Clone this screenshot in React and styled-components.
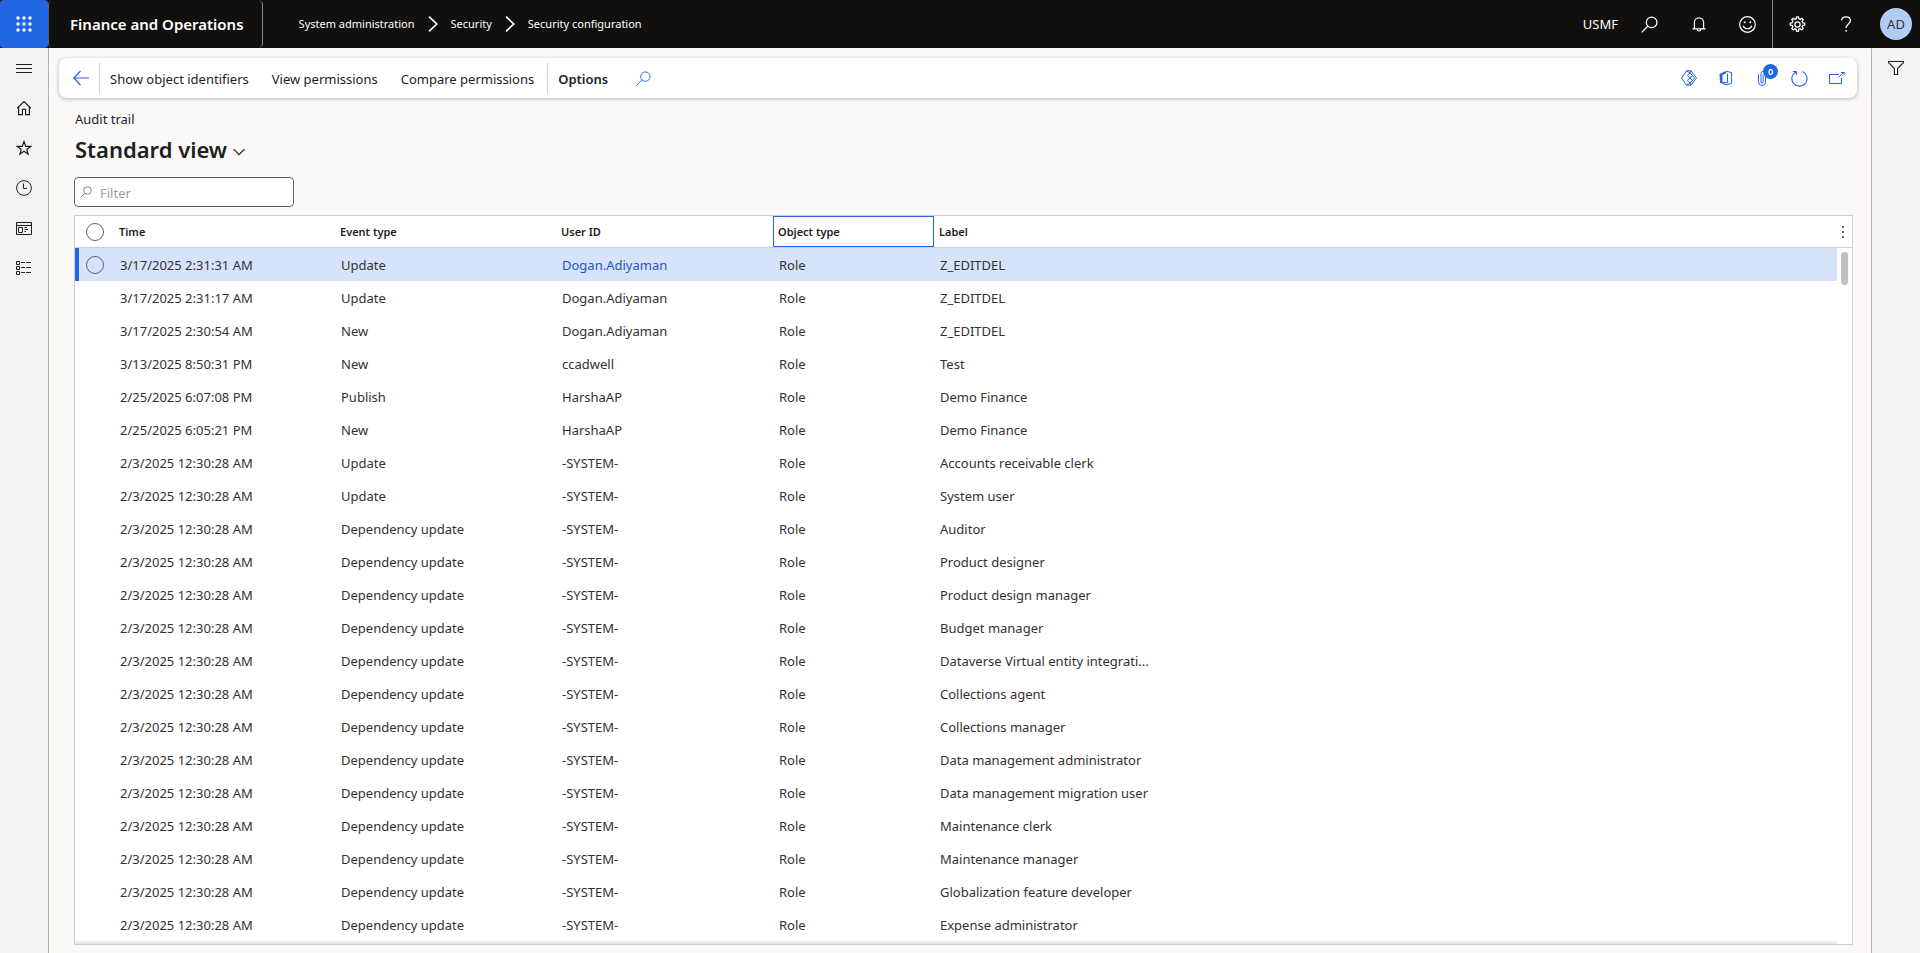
import styled, { createGlobalStyle, css } from "styled-components";

const GlobalStyle = createGlobalStyle`
    * {
        box-sizing: border-box;
    }

    body {
        margin: 0;
        font-family: "Noto Sans", "Open Sans", sans-serif;
        font-size: 13px;
        line-height: 20px;
        color: #201f1e;
        background-color: #faf9f8;
    }

    button, input {
        font: inherit;
        color: inherit;
    }

    button {
        padding: 0;
        border: 0;
        background: none;
        cursor: pointer;
    }

    a {
        color: inherit;
        text-decoration: none;
    }
`;

/* ---------- icons ---------- */

const Icon = styled.svg.attrs({ fill: "none", stroke: "currentColor", "aria-hidden": true })`
    display: block;
    flex: none;
    width: ${(props) => props.$size || 16}px;
    height: ${(props) => props.$size || 16}px;
`;

const WaffleIcon = () => (
    <Icon viewBox="0 0 16 16">
        {[2, 8, 14].map((y) =>
            [2, 8, 14].map((x) => <circle key={`${x}-${y}`} cx={x} cy={y} r="1.7" fill="#fff" stroke="none" />)
        )}
    </Icon>
);

const SearchIcon = ({ size, width = 1 }) => (
    <Icon $size={size} viewBox="0 0 16 16" strokeWidth={width}>
        <circle cx="10" cy="6" r="5" />
        <path d="M6.4 9.6 0.6 15.4" />
    </Icon>
);

const ChevronIcon = () => (
    <Icon viewBox="0 0 16 16" strokeWidth="1.6">
        <path d="M4 0.7 11.8 8 4 15.3" />
    </Icon>
);

const ChevronDownIcon = () => (
    <Icon $size={12} viewBox="0 0 12 12" strokeWidth="1.2">
        <path d="M0.6 3.2 6 8.6 11.4 3.2" />
    </Icon>
);

const BellIcon = () => (
    <Icon viewBox="0 0 16 16" strokeWidth="1.2">
        <path d="M3.4 12.5V6.4a4.6 4.6 0 0 1 9.2 0v6.1M1.5 12.8h13M6.2 13.2a1.8 1.8 0 0 0 3.6 0" />
    </Icon>
);

const SmileIcon = () => (
    <Icon $size={17} viewBox="0 0 17 17" strokeWidth="1.2">
        <circle cx="8.5" cy="8.5" r="7.8" />
        <circle cx="5.7" cy="6.2" r="1" fill="currentColor" stroke="none" />
        <circle cx="11.3" cy="6.2" r="1" fill="currentColor" stroke="none" />
        <path d="M4.2 9.8a4.6 4.6 0 0 0 8.6 0" />
    </Icon>
);

const GearIcon = () => (
    <Icon $size={17} viewBox="0 0 17 17" strokeWidth="1.3" strokeLinejoin="round">
        <circle cx="8.5" cy="8.5" r="2.6" />
        <path d="M7.3 2.7 7.5.8h2l.2 1.9 1.6.7 1.5-1.2 1.5 1.5-1.2 1.6.6 1.5 2 .3v2l-2 .2-.6 1.6 1.2 1.5-1.5 1.5-1.5-1.2-1.6.7-.2 1.9h-2l-.2-1.9-1.6-.7-1.5 1.2-1.5-1.5 1.2-1.5-.7-1.6-1.9-.2v-2l1.9-.3.7-1.5-1.2-1.6 1.5-1.5 1.5 1.2z" />
    </Icon>
);

const HelpIcon = () => (
    <Icon viewBox="0 0 16 16" strokeWidth="1.3">
        <path d="M3.6 4.6C3.6 2.2 5.4.8 8 .8s4.4 1.5 4.4 3.7c0 3.3-4.3 3.6-4.3 7.4" />
        <path d="M8.1 14v1.8" />
    </Icon>
);

const MenuIcon = () => (
    <Icon viewBox="0 0 16 16">
        <path d="M0 4.5h16M0 8.5h16M0 12.5h16" />
    </Icon>
);

const HomeIcon = () => (
    <Icon viewBox="0 0 16 16" strokeWidth="1.2">
        <path d="M1.2 8.2 8 1.5l6.8 6.7M2.6 7v7.6h3.8V9.4h3.2v5.2h3.8V7" />
    </Icon>
);

const StarIcon = () => (
    <Icon viewBox="0 0 16 16" strokeWidth="1.2">
        <path d="m8 1.4 1.7 4.9h5.1l-4.1 3.1 1.5 4.9L8 11.3l-4.2 3 1.5-4.9-4.1-3.1h5.1z" />
    </Icon>
);

const ClockIcon = () => (
    <Icon viewBox="0 0 16 16">
        <circle cx="8" cy="8" r="7.4" />
        <path d="M7.5 3.5v5h3.5" />
    </Icon>
);

const WorkspaceIcon = () => (
    <Icon viewBox="0 0 16 16">
        <path d="M.5 2.5h15v12H.5zM.5 5.5h15M2.5 7.5h4v5h-4zM8.5 7.5H11M8.5 9.5H12M8.5 11.5H10" />
    </Icon>
);

const ModulesIcon = () => (
    <Icon viewBox="0 0 16 16">
        <path d="M.5 1.5h3v3h-3zM.5 6.5h3v3h-3zM.5 11.5h3v3h-3zM5 2.5h4M10 2.5h5M5 7.5h4M10 7.5h5M5 12.5h4M10 12.5h5" />
    </Icon>
);

const BackIcon = () => (
    <Icon viewBox="0 0 16 16" strokeWidth="1.2">
        <path d="M7.5 1 .8 8l6.7 7M1 8h15" />
    </Icon>
);

const DiamondIcon = () => (
    <Icon viewBox="0 0 16 16">
        <path d="M5.5.8H10L15.5 8 10 15.2H5.5L.5 8z" />
        <path d="M5.500.8 9 3l2.500 2.600L9 8 6.500 5.600 9 3l1-2.200M5.500 15.200 9 13l2.500-2.600L9 8l-2.500 2.400L9 13l1 2.200M11.500 5.600 13.500 8l-2 2.400" />
    </Icon>
);

const OfficeIcon = () => (
    <Icon viewBox="0 0 16 16">
        <path d="M1.5 4 8 1v2.500l-3.500 1.200v7L2 12.500z" fill="currentColor" stroke="none" />
        <path d="m8 1.200 5.500 1.300v11L8 14.800l-6-2.600 7.500.500V3.500" />
    </Icon>
);

const AttachIcon = () => (
    <Icon viewBox="0 0 16 16">
        <path d="M3.500 4v8a3.500 3.500 0 0 0 7 0V3.500a2.200 2.200 0 0 0-4.500 0V12a1 1 0 0 0 2.200 0V4.500" />
    </Icon>
);

const RefreshIcon = () => (
    <Icon $size={17} viewBox="0 0 17 17" strokeWidth="1.1">
        <path d="M11.5 1.600A7.600 7.600 0 1 1 4.800 1.900M1.800 1.500h3.600v3.600" />
    </Icon>
);

const PopOutIcon = () => (
    <Icon viewBox="0 0 16 16">
        <path d="M10 4.500H.5v9h12V7.500M9.500 7.500 15 2M12 2.500h3.500M15 2v3.500" />
    </Icon>
);

const FunnelIcon = () => (
    <Icon viewBox="0 0 16 16" strokeWidth="1.1">
        <path d="M.6 1.5h14.8v1.2L9.600 8.500v6H6.400v-6L.6 2.700z" />
    </Icon>
);

const MoreIcon = () => (
    <Icon viewBox="0 0 16 16" strokeWidth="2">
        <path d="M8 2v2M8 7v2M8 12v2" />
    </Icon>
);

/* ---------- top bar ---------- */

const Page = styled.div`
    min-height: 100vh;
    display: flex;
    flex-direction: column;
`;

const TopBar = styled.header`
    display: flex;
    height: 48px;
    color: #fff;
    background-color: #11100f;
`;

const Waffle = styled.button`
    width: 48px;
    display: grid;
    place-items: center;
    border-radius: 4px;
    background-color: #2266e3;
`;

const ProductName = styled.a`
    margin: 1px 0;
    padding: 0 18px 0 21px;
    display: flex;
    align-items: center;
    border-right: 1px solid #8a8886;
    border-left: 1px solid #605e5c;
    border-radius: 4px;
    font-size: 15px;
    font-weight: 600;
`;

const Breadcrumb = styled.nav`
    flex: 1;
    margin-left: 36px;
    display: flex;
    align-items: center;
    gap: 10px;
    font-size: 11px;
`;

const TopActions = styled.div`
    display: flex;
    align-items: center;
`;

const Company = styled.button`
    padding: 0 7px;
    height: 48px;
`;

const TopButton = styled.button`
    width: 49px;
    height: 48px;
    display: grid;
    place-items: center;
    ${(props) =>
        props.$divided &&
        css`
            border-left: 1px solid #8a8886;
        `}
`;

const Avatar = styled.button`
    width: 32px;
    height: 32px;
    margin: 0 8px 0 10px;
    border-radius: 50%;
    color: #323130;
    background-color: #b5cbf7;
`;

/* ---------- body ---------- */

const Body = styled.div`
    flex: 1;
    display: flex;
`;

const Rail = styled.nav`
    width: 49px;
    flex: none;
    border-right: 1px solid #b3b0ad;
    background-color: #f3f2f1;
`;

const FilterRail = styled(Rail)`
    border-right: 0;
    border-left: 1px solid #b3b0ad;
`;

const RailButton = styled.button`
    width: 48px;
    height: 40px;
    display: grid;
    place-items: center;
`;

const Main = styled.main`
    flex: 1;
    min-width: 0;
    padding: 10px 14px 8px 10px;
    display: flex;
    flex-direction: column;
`;

const ActionPane = styled.div`
    height: 40px;
    padding: 0 2px 0 3px;
    display: flex;
    align-items: center;
    border-radius: 8px;
    background-color: #fff;
    box-shadow: 0 1px 4px rgba(0, 0, 0, 0.28);
`;

const PaneGroup = styled.div`
    height: 30px;
    display: flex;
    align-items: center;
    border-left: 1px solid #d2d0ce;
`;

const PaneButton = styled.button`
    padding: 2px 13px 0 10px;
    height: 30px;
    font-weight: ${(props) => (props.$bold ? 600 : 400)};
`;

const PaneIcon = styled.button`
    position: relative;
    width: 37px;
    height: 40px;
    display: grid;
    place-items: center;
    color: #2266e3;
`;

const PaneSearch = styled(PaneIcon)`
    margin-left: 4px;
`;

const PaneIcons = styled.div`
    margin-left: auto;
    display: flex;
`;

const Badge = styled.span`
    position: absolute;
    top: 6px;
    right: 3px;
    width: 15px;
    height: 15px;
    border-radius: 50%;
    font-size: 9px;
    font-weight: 600;
    line-height: 15px;
    color: #fff;
    background-color: #2266e3;
`;

const Content = styled.section`
    flex: 1;
    margin: 11px 4px 0 15px;
    display: flex;
    flex-direction: column;
`;

const Caption = styled.div`
    padding-left: 1px;
`;

const ViewName = styled.h1`
    margin: 4px 0 0;
    padding-left: 1px;
    font-size: 22px;
    font-weight: 600;
    line-height: 32px;
`;

const ViewButton = styled.button`
    display: flex;
    align-items: center;
    gap: 6px;

    svg {
        margin-top: 5px;
    }
`;

const FilterBox = styled.label`
    width: 220px;
    height: 30px;
    margin: 12px 0 8px;
    padding: 0 6px 0 5px;
    display: flex;
    align-items: center;
    gap: 8px;
    border: 1px solid #605e5c;
    border-radius: 4px;
    color: #605e5c;
    background-color: #fff;

    input {
        min-width: 0;
        flex: 1;
        padding: 2px 0 0;
        border: 0;
        outline: 0;
        background: none;
    }

    input::placeholder {
        color: #a19f9d;
        opacity: 1;
    }
`;

/* ---------- grid ---------- */

const GridFrame = styled.div`
    position: relative;
    flex: 1;
    border: 1px solid #d2d0ce;
    background-color: #fff;

    &::after {
        content: "";
        position: absolute;
        right: 15px;
        bottom: 0;
        left: 0;
        height: 4px;
        background: linear-gradient(rgba(0, 0, 0, 0), rgba(0, 0, 0, 0.12));
    }
`;

const Grid = styled.table`
    width: 100%;
    table-layout: fixed;
    border-collapse: separate;
    border-spacing: 0;
    text-align: left;
`;

const Column = styled.col`
    width: ${(props) => props.$width};
`;

const HeadCell = styled.th`
    height: 32px;
    padding: 0 5px;
    border-bottom: 1px solid #d2d0ce;
    font-size: 11px;
    font-weight: 600;
    ${(props) =>
        props.$focused &&
        css`
            box-shadow: inset 0 0 0 1px #2266e3;
        `}
`;

const IconCell = styled(HeadCell)`
    padding: 0;
`;

const MoreButton = styled.button`
    display: block;
    margin-left: -2px;
    color: #605e5c;
`;

const Cell = styled.td`
    height: 33px;
    padding: 0 6px;
    color: #323130;
    white-space: nowrap;

    a {
        color: #1f55bd;
    }
`;

const Row = styled.tr`
    ${(props) =>
        props.$selected &&
        css`
            ${Cell}:not(:last-child) {
                background-color: #d7e3fb;
            }

            ${Cell}:first-child {
                padding: 0;
                border-left: 4px solid #2266e3;
            }
        `}
`;

const RoundCheck = styled.input.attrs({ type: "checkbox" })`
    appearance: none;
    display: block;
    width: 18px;
    height: 18px;
    margin: 0 0 0 ${(props) => (props.$inRow ? 7 : 11)}px;
    border: 1px solid #605e5c;
    border-radius: 50%;
`;

const ScrollThumb = styled.div`
    position: absolute;
    top: 36px;
    right: 4px;
    width: 7px;
    height: 33px;
    border-radius: 4px;
    background-color: #c1c1c1;
`;

const system = (type, label) => ["2/3/2025 12:30:28 AM", type, "-SYSTEM-", "Role", label];

const rows = [
    ["3/17/2025 2:31:31 AM", "Update", "Dogan.Adiyaman", "Role", "Z_EDITDEL"],
    ["3/17/2025 2:31:17 AM", "Update", "Dogan.Adiyaman", "Role", "Z_EDITDEL"],
    ["3/17/2025 2:30:54 AM", "New", "Dogan.Adiyaman", "Role", "Z_EDITDEL"],
    ["3/13/2025 8:50:31 PM", "New", "ccadwell", "Role", "Test"],
    ["2/25/2025 6:07:08 PM", "Publish", "HarshaAP", "Role", "Demo Finance"],
    ["2/25/2025 6:05:21 PM", "New", "HarshaAP", "Role", "Demo Finance"],
    system("Update", "Accounts receivable clerk"),
    system("Update", "System user"),
    system("Dependency update", "Auditor"),
    system("Dependency update", "Product designer"),
    system("Dependency update", "Product design manager"),
    system("Dependency update", "Budget manager"),
    system("Dependency update", "Dataverse Virtual entity integrati..."),
    system("Dependency update", "Collections agent"),
    system("Dependency update", "Collections manager"),
    system("Dependency update", "Data management administrator"),
    system("Dependency update", "Data management migration user"),
    system("Dependency update", "Maintenance clerk"),
    system("Dependency update", "Maintenance manager"),
    system("Dependency update", "Globalization feature developer"),
    system("Dependency update", "Expense administrator"),
];

const columns = ["Time", "Event type", "User ID", "Object type", "Label"];
const widths = ["39px", "221px", "221px", "217px", "161px", "auto", "15px"];

const railItems = [
    ["Expand the navigation pane", MenuIcon],
    ["Home", HomeIcon],
    ["Favorites", StarIcon],
    ["Recent", ClockIcon],
    ["Workspaces", WorkspaceIcon],
    ["Modules", ModulesIcon],
];

function Header() {
    return (
        <TopBar>
            <Waffle aria-label="App launcher"><WaffleIcon /></Waffle>
            <ProductName href="#">Finance and Operations</ProductName>
            <Breadcrumb>
                <a href="#">System administration</a>
                <ChevronIcon />
                <a href="#">Security</a>
                <ChevronIcon />
                <a href="#">Security configuration</a>
            </Breadcrumb>
            <TopActions>
                <Company>USMF</Company>
                <TopButton aria-label="Search"><SearchIcon size={17} width={1.2} /></TopButton>
                <TopButton aria-label="Notifications"><BellIcon /></TopButton>
                <TopButton aria-label="Feedback"><SmileIcon /></TopButton>
                <TopButton aria-label="Settings" $divided><GearIcon /></TopButton>
                <TopButton aria-label="Help"><HelpIcon /></TopButton>
                <Avatar>AD</Avatar>
            </TopActions>
        </TopBar>
    );
}

function ActionBar() {
    return (
        <ActionPane>
            <PaneIcon aria-label="Back"><BackIcon /></PaneIcon>
            <PaneGroup>
                <PaneButton>Show object identifiers</PaneButton>
                <PaneButton>View permissions</PaneButton>
                <PaneButton>Compare permissions</PaneButton>
            </PaneGroup>
            <PaneGroup>
                <PaneButton $bold>Options</PaneButton>
            </PaneGroup>
            <PaneSearch aria-label="Search actions"><SearchIcon size={15} /></PaneSearch>
            <PaneIcons>
                <PaneIcon aria-label="Power Apps"><DiamondIcon /></PaneIcon>
                <PaneIcon aria-label="Open in Office"><OfficeIcon /></PaneIcon>
                <PaneIcon aria-label="Attachments"><AttachIcon /><Badge>0</Badge></PaneIcon>
                <PaneIcon aria-label="Refresh"><RefreshIcon /></PaneIcon>
                <PaneIcon aria-label="Open in new window"><PopOutIcon /></PaneIcon>
            </PaneIcons>
        </ActionPane>
    );
}

function AuditGrid() {
    return (
        <GridFrame>
            <Grid>
                <colgroup>
                    {widths.map((width, i) => <Column key={i} $width={width} />)}
                </colgroup>
                <thead>
                    <tr>
                        <IconCell><RoundCheck aria-label="Select all rows" /></IconCell>
                        {columns.map((name) => (
                            <HeadCell key={name} $focused={name === "Object type"}>{name}</HeadCell>
                        ))}
                        <IconCell><MoreButton aria-label="Grid options"><MoreIcon /></MoreButton></IconCell>
                    </tr>
                </thead>
                <tbody>
                    {rows.map(([time, type, user, object, label], i) => (
                        <Row key={i} $selected={i === 0}>
                            <Cell>{i === 0 && <RoundCheck $inRow aria-label="Select row" />}</Cell>
                            <Cell>{time}</Cell>
                            <Cell>{type}</Cell>
                            <Cell>{i === 0 ? <a href="#">{user}</a> : user}</Cell>
                            <Cell>{object}</Cell>
                            <Cell>{label}</Cell>
                            <Cell />
                        </Row>
                    ))}
                </tbody>
            </Grid>
            <ScrollThumb />
        </GridFrame>
    );
}

export default function App() {
    return (
        <Page>
            <GlobalStyle />
            <Header />
            <Body>
                <Rail>
                    {railItems.map(([name, Glyph]) => (
                        <RailButton key={name} aria-label={name}><Glyph /></RailButton>
                    ))}
                </Rail>
                <Main>
                    <ActionBar />
                    <Content>
                        <Caption>Audit trail</Caption>
                        <ViewName>
                            <ViewButton>Standard view<ChevronDownIcon /></ViewButton>
                        </ViewName>
                        <FilterBox>
                            <SearchIcon size={12} />
                            <input type="text" placeholder="Filter" aria-label="Filter" />
                        </FilterBox>
                        <AuditGrid />
                    </Content>
                </Main>
                <FilterRail>
                    <RailButton aria-label="Show filters"><FunnelIcon /></RailButton>
                </FilterRail>
            </Body>
        </Page>
    );
}
